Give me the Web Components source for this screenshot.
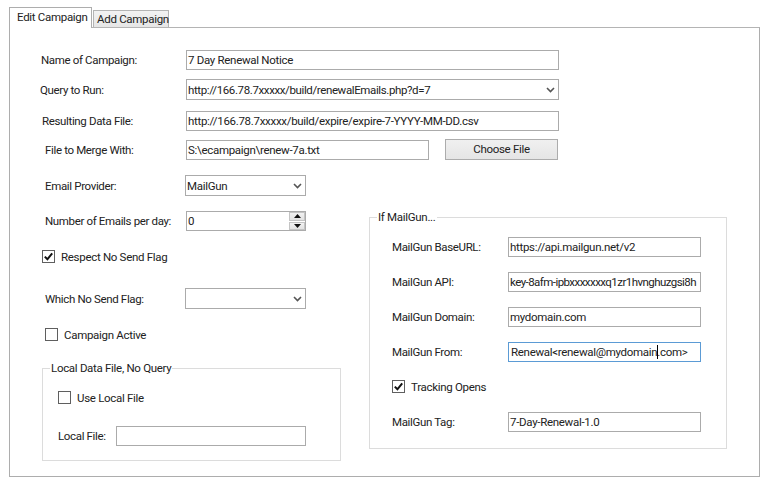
<!DOCTYPE html>
<html>
<head>
<meta charset="utf-8">
<title>Edit Campaign</title>
<style>
    html, body { margin: 0; background: #fff; }
    body { font: 11.5px Roboto, "Liberation Sans", sans-serif; letter-spacing: -0.3px; color: #222; }
</style>
</head>
<body>
<campaign-tabs>
    <tab-button active>Edit Campaign</tab-button>
    <tab-button slot="other">Add Campaign</tab-button>

    <form-row style="margin-top:22px;--x:31px;--w:145px">
        Name of Campaign:
        <text-box slot="control" style="width:373px">7 Day Renewal Notice</text-box>
    </form-row>
    <form-row style="margin-top:9px;--x:30px;--w:146px;height:21px">
        Query to Run:
        <combo-box slot="control" style="width:373px;letter-spacing:-0.38px">http://166.78.7xxxxx/build/renewalEmails.php?d=7</combo-box>
    </form-row>
    <form-row style="margin-top:11px;--x:32px;--w:144px">
        Resulting Data File:
        <text-box slot="control" style="width:373px">http://166.78.7xxxxx/build/expire/expire-7-YYYY-MM-DD.csv</text-box>
    </form-row>
    <form-row style="margin-top:8px;--x:35px;--w:141px;height:21px">
        File to Merge With:
        <text-box slot="control" style="width:243px;height:20px">S:\ecampaign\renew-7a.txt</text-box>
        <push-button slot="control" style="margin-left:16px;width:113px">Choose File</push-button>
    </form-row>
    <form-row style="margin-top:15px;--x:35px;--w:140px;height:21px">
        Email Provider:
        <combo-box slot="control" style="width:121px">MailGun</combo-box>
    </form-row>

    <two-columns>
        <form-row style="margin-top:15px;--x:35px;--w:141px">
            Number of Emails per day:
            <spin-box slot="control" style="width:120px">0</spin-box>
        </form-row>
        <check-box checked style="margin:19px 0 0 32px">Respect No Send Flag</check-box>
        <form-row style="margin-top:25px;--x:35px;--w:140px;height:21px">
            Which No Send Flag:
            <combo-box slot="control" style="width:121px"></combo-box>
        </form-row>
        <check-box style="margin:19px 0 0 35px">Campaign Active</check-box>
        <group-box style="margin:27px 0 0 32px;width:299px;height:93px">
            <span slot="title">Local Data File, No Query</span>
            <check-box style="margin:15px 0 0 15px">Use Local File</check-box>
            <form-row style="margin-top:22px;--x:15px;--w:58px">
                Local File:
                <text-box slot="control" style="width:190px"></text-box>
            </form-row>
        </group-box>

        <group-box slot="right" style="margin-top:21px;width:358px;height:232px">
            <span slot="title">If MailGun...</span>
            <form-row style="margin-top:12px;--x:22px;--w:116px">
                MailGun BaseURL:
                <text-box slot="control" style="width:193px">https://api.mailgun.net/v2</text-box>
            </form-row>
            <form-row style="margin-top:15px;--x:22px;--w:116px">
                MailGun API:
                <text-box slot="control" style="width:193px;letter-spacing:-0.55px">key-8afm-ipbxxxxxxxq1zr1hvnghuzgsi8h</text-box>
            </form-row>
            <form-row style="margin-top:15px;--x:22px;--w:116px">
                MailGun Domain:
                <text-box slot="control" style="width:193px">mydomain.com</text-box>
            </form-row>
            <form-row style="margin-top:15px;--x:22px;--w:116px">
                MailGun From:
                <text-box slot="control" focused style="width:193px">Renewal&lt;renewal@mydomain<i class="caret"></i>.com&gt;</text-box>
            </form-row>
            <check-box checked style="margin:18px 0 0 22px">Tracking Opens</check-box>
            <form-row style="margin-top:19px;--x:22px;--w:116px">
                MailGun Tag:
                <text-box slot="control" style="width:193px">7-Day-Renewal-1.0</text-box>
            </form-row>
        </group-box>
    </two-columns>
</campaign-tabs>

<script>
// small helper, every element just stamps its own shadow markup
class Base extends HTMLElement {
    constructor() {
        super();
        this.attachShadow({ mode: 'open' });
        this.shadowRoot.innerHTML = this.constructor.markup;
    }
}

const chevron = `<svg width="9" height="6" viewBox="0 0 9 6"><path d="M1 1l3.5 3.5L8 1" fill="none" stroke="#555" stroke-width="1.6"/></svg>`;

class CampaignTabs extends Base {
    static markup = `
        <style>
            :host { display: block; padding: 7px 0 0 9px; }
            .strip { display: flex; align-items: flex-end; height: 20px; }
            .panel { box-sizing: border-box; width: 751px; height: 450px; border: 1px solid #adadad; border-top-color: #b4b4b4; }
        </style>
        <div class="strip"><slot></slot><slot name="other"></slot></div>
        <div class="panel"><slot name="page"></slot></div>`;

    connectedCallback() {
        for (const child of this.children) {
            if (child.localName !== 'tab-button') child.slot = 'page';
        }
    }
}

class TabButton extends Base {
    static markup = `
        <style>
            :host { display: block; box-sizing: border-box; height: 17px; width: 76px; margin-left: 1px; padding-left: 3px;
                    line-height: 16px; white-space: nowrap; color: #222; background: linear-gradient(#f2f2f2, #e6e6e6);
                    border: 1px solid #b4b4b4; border-bottom: 0; }
            :host([active]) { height: 21px; width: 83px; margin: 0 0 -1px 0; padding-left: 7px; line-height: 18px;
                    background: #fff; position: relative; z-index: 1; border-color: #adadad; }
        </style>
        <slot></slot>`;
}

class FormRow extends Base {
    static markup = `
        <style>
            :host { display: flex; align-items: center; height: 20px; white-space: nowrap; }
            .label { box-sizing: border-box; flex: none; width: calc(var(--x) + var(--w)); padding-left: var(--x); letter-spacing: -0.35px; }
            .control { display: flex; align-items: center; }
        </style>
        <div class="label"><slot></slot></div>
        <div class="control"><slot name="control"></slot></div>`;
}

class TextBox extends Base {
    static markup = `
        <style>
            :host { display: block; box-sizing: border-box; height: 20px; padding-left: 1px; overflow: hidden;
                    white-space: nowrap; line-height: 18px; color: #222; background: #fff; border: 1px solid #ababab; }
            :host([focused]) { border-color: #5b9bd5; padding-left: 2px; }
            ::slotted(.caret) { display: inline-block; width: 1px; height: 14px; margin-right: -1px; background: #000; vertical-align: -3px; }
        </style>
        <slot></slot>`;
}

class ComboBox extends Base {
    static markup = `
        <style>
            :host { display: flex; box-sizing: border-box; height: 21px; align-items: center;
                    padding: 0 3px 0 1px; white-space: nowrap; background: #fff; border: 1px solid #ababab; }
            svg { display: block; flex: none; margin-left: auto; }
        </style>
        <slot></slot>${chevron}`;
}

class SpinBox extends Base {
    static markup = `
        <style>
            :host { display: flex; box-sizing: border-box; height: 20px; justify-content: space-between;
                    padding-left: 1px; line-height: 18px; background: #fff; border: 1px solid #ababab; }
            .btns { display: flex; flex-direction: column; width: 16px; margin: 0; gap: 1px; }
            .btns div { flex: 1; display: flex; align-items: center; justify-content: center;
                        background: linear-gradient(#f2f2f2, #e2e2e2); border: 1px solid #c4c4c4; box-sizing: border-box; }
            svg { display: block; }
        </style>
        <slot></slot>
        <div class="btns">
            <div><svg width="7" height="4" viewBox="0 0 7 4"><path d="M3.5 0L7 4H0z" fill="#111"/></svg></div>
            <div><svg width="7" height="4" viewBox="0 0 7 4"><path d="M0 0h7L3.5 4z" fill="#111"/></svg></div>
        </div>`;
}

class PushButton extends Base {
    static markup = `
        <style>
            :host { display: block; box-sizing: border-box; height: 21px; line-height: 19px; text-align: center; color: #222;
                    background: linear-gradient(#f0f0f0, #e5e5e5); border: 1px solid #acacac; }
        </style>
        <slot></slot>`;
}

class CheckBox extends Base {
    static markup = `
        <style>
            :host { display: flex; align-items: center; height: 13px; gap: 6px; white-space: nowrap; }
            .box { box-sizing: border-box; flex: none; width: 13px; height: 13px; background: #fff; border: 1px solid #5f5f5f; }
            svg { display: none; }
            :host([checked]) svg { display: block; }
        </style>
        <div class="box"><svg width="11" height="11" viewBox="0 0 11 11"><path d="M1.8 5.6l2.6 2.7 4.8-6" fill="none" stroke="#111" stroke-width="2"/></svg></div>
        <slot></slot>`;
}

class GroupBox extends Base {
    static markup = `
        <style>
            :host { display: block; box-sizing: border-box; border: 1px solid #dcdcdc; }
            .title { width: fit-content; height: 15px; line-height: 15px; margin: -8px 0 0 7px; padding: 0 1px; background: #fff; }
        </style>
        <div class="title"><slot name="title"></slot></div>
        <slot></slot>`;
}

class TwoColumns extends Base {
    static markup = `
        <style>
            :host { display: flex; }
            .left { width: 331px; flex: none; }
            .right { margin-left: 28px; }
        </style>
        <div class="left"><slot></slot></div>
        <div class="right"><slot name="right"></slot></div>`;
}

customElements.define('campaign-tabs', CampaignTabs);
customElements.define('tab-button', TabButton);
customElements.define('form-row', FormRow);
customElements.define('text-box', TextBox);
customElements.define('combo-box', ComboBox);
customElements.define('spin-box', SpinBox);
customElements.define('push-button', PushButton);
customElements.define('check-box', CheckBox);
customElements.define('group-box', GroupBox);
customElements.define('two-columns', TwoColumns);
</script>
</body>
</html>
